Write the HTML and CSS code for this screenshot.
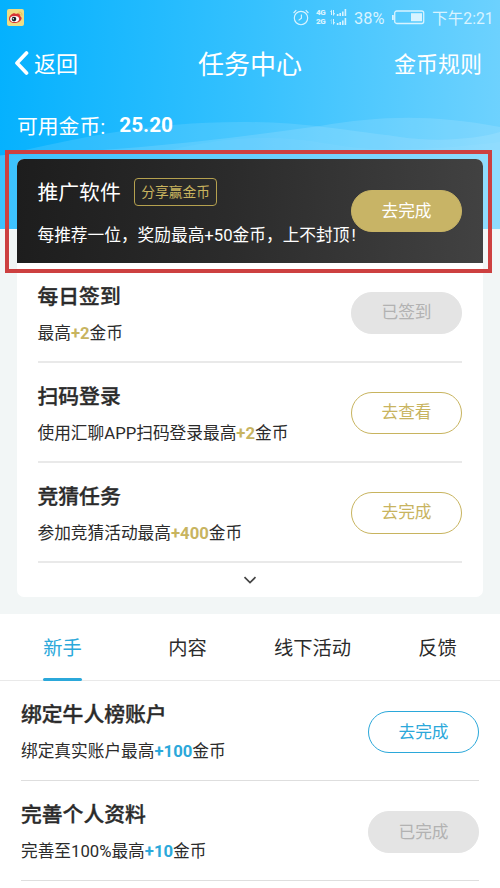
FILE: index.html
```html
<!DOCTYPE html>
<html lang="zh-CN">
<head>
<meta charset="utf-8">
<title>任务中心</title>
<link rel="stylesheet" href="styles.css">
</head>
<body>
<div class="page">
  <header class="hero">
    <svg class="waves" viewBox="0 0 500 229" preserveAspectRatio="none" aria-hidden="true">
      <path d="M0 156C80 137 150 122 240 122C300 122 330 128 400 137C440 143 480 138 500 132V229H0Z" fill="#fff" fill-opacity=".11"/>
      <path d="M0 155C130 152 240 137 320 126C380 116 430 114 500 127V229H0Z" fill="#fff" fill-opacity=".12"/>
      <path d="M170 150C220 138 270 133 330 144C380 153 430 150 500 142V229H170Z" fill="#fff" fill-opacity=".04"/>
    </svg>
    <div class="status">
      <svg class="weibo" viewBox="0 0 17 17">
        <rect width="17" height="17" rx="2" fill="#efdc83"/>
        <path d="M2 10C2 6 7 3 9 5C12 4 14 5 13 7C17 9 13 14 8 14C4 14 2 12 2 10Z" fill="#d73336"/>
        <ellipse cx="7.6" cy="10" rx="4.5" ry="3.1" fill="#fff"/>
        <circle cx="7" cy="10.1" r="2.3" fill="#17232b"/>
        <circle cx="6.3" cy="9.7" r=".7" fill="#fff"/>
        <path d="M11.5 3.2C14 2.5 15.5 4.4 14.8 6.7M11.8 5C13 4.8 13.5 5.5 13.3 6.5" fill="none" stroke="#e9b94e" stroke-width=".9"/>
      </svg>
      <div class="indicators">
        <svg class="alarm" viewBox="0 0 16 17" fill="none" stroke="currentColor" stroke-width="1.15">
          <circle cx="8" cy="9" r="6.7"/>
          <path d="M8.4 5.5V9.2L5.6 11.4M.6 4L3.300 1.2M12.700 1.2L15.4 4"/>
        </svg>
        <div class="network"><span>4G</span><span>2G</span></div>
        <svg class="signal" viewBox="0 0 17 17" fill="currentColor">
          <path d="M0 3L2 .5V6H1V3ZM3 1H4V4H5L3.5 7L3 6ZM6.8 5H8.5V7H6.8ZM9.4 4H11V7H9.4ZM12 2.5H13.6V7H12ZM14.6 0H16.2V7H14.6Z"/>
          <path d="M3 10H4V13H5L3.5 16L3 15ZM6.8 14H8.5V16H6.8ZM9.4 13H11V16H9.4ZM12 11.5H13.6V16H12ZM14.6 9H16.2V16H14.6Z"/>
          <path d="M0 12L2 9.5V15H1V12Z" opacity=".4"/>
        </svg>
        <span class="percent">38%</span>
        <svg class="battery" viewBox="0 0 33 15">
          <rect x="2.700" y="1" width="29" height="12.500" rx="2" fill="none" stroke="currentColor" stroke-width="1.300"/>
          <path d="M0 5H1.800V10H0Z" fill="currentColor"/>
          <rect x="19" y="3.200" width="11" height="8" fill="currentColor"/>
        </svg>
        <span class="clock">下午2:21</span>
      </div>
    </div>
    <nav class="navbar">
      <a class="back"><svg viewBox="0 0 15 24"><path d="M12.500 2L3 12L12.500 22" fill="none" stroke="#fff" stroke-width="3.700" stroke-linecap="round" stroke-linejoin="round"/></svg>返回</a>
      <h1>任务中心</h1>
      <a class="rules">金币规则</a>
    </nav>
    <div class="balance"><span>可用金币:</span><b>25.20</b></div>
  </header>

  <main class="card">
    <div class="highlight"></div>
    <section class="promo">
      <div class="promo-text">
        <div class="promo-head"><h2>推广软件</h2><span class="tag">分享赢金币</span></div>
        <p>每推荐一位，奖励最高+50金币，上不封顶<span class="bang">!</span></p>
      </div>
      <button class="btn gold-fill">去完成</button>
    </section>
    <section class="tasks">
      <article class="task">
        <div><h3>每日签到</h3><p>最高<b>+2</b>金币</p></div>
        <button class="btn done">已签到</button>
      </article>
      <article class="task">
        <div><h3>扫码登录</h3><p>使用汇聊APP扫码登录最高<b>+2</b>金币</p></div>
        <button class="btn gold">去查看</button>
      </article>
      <article class="task">
        <div><h3>竞猜任务</h3><p>参加竞猜活动最高<b>+400</b>金币</p></div>
        <button class="btn gold">去完成</button>
      </article>
    </section>
    <div class="expand"><svg viewBox="0 0 14 8"><path d="M1.500 1.200L7 6.500L12.500 1.200" fill="none" stroke="#444" stroke-width="1.700"/></svg></div>
  </main>

  <nav class="tabs">
    <a class="active">新手</a><a>内容</a><a>线下活动</a><a>反馈</a>
  </nav>
  <section class="tasks novice">
    <article class="task">
      <div><h3>绑定牛人榜账户</h3><p>绑定真实账户最高<b>+100</b>金币</p></div>
      <button class="btn blue">去完成</button>
    </article>
    <article class="task">
      <div><h3>完善个人资料</h3><p>完善至100%最高<b>+10</b>金币</p></div>
      <button class="btn done">已完成</button>
    </article>
  </section>
</div>
</body>
</html>
```
FILE: styles.css
```css
* { box-sizing: border-box; }
body {
  margin: 0;
  background: #f2f6f6;
  color: #2b2b2b;
  font-family: Roboto, "Noto Sans CJK SC", sans-serif;
}
h1, h2, h3, p { margin: 0; font-weight: 400; }
.page { height: 888px; overflow: hidden; }

.hero {
  position: relative;
  height: 229px;
  color: #fff;
  background: linear-gradient(93deg, #04b1fe 0%, #36c1fe 50%, #6fd2fe 100%);
}
.waves { position: absolute; inset: 0; width: 100%; height: 100%; }
.status, .navbar, .balance { position: relative; display: flex; align-items: center; }
.status { height: 34px; padding: 0 7px; justify-content: space-between; }
.weibo { width: 17px; height: 17px; }
.indicators { display: flex; align-items: center; color: #d8f3ff; font-size: 16.5px; }
.alarm { width: 16px; height: 17px; margin-right: 7px; }
.network { display: flex; flex-direction: column; width: 14px; font-size: 8px; line-height: 9.5px; font-weight: 900; letter-spacing: -.3px; }
.signal { width: 17px; height: 17px; margin-right: 7px; }
.percent { width: 38px; margin-top: 2px; font-size: 16.4px; white-space: nowrap; }
.battery { width: 33px; height: 15px; margin-right: 7px; }
.clock { width: 61px; margin-top: 1px; font-size: 15.7px; white-space: nowrap; }

.navbar { height: 56px; display: grid; grid-template-columns: 1fr auto 1fr; padding: 0 18px 0 14px; font-size: 22px; }
.navbar h1 { margin-left: 4px; font-size: 26px; }
.back { display: flex; align-items: center; gap: 5px; }
.back svg { width: 15px; height: 24px; margin-top: 2px; }
.rules { justify-self: end; }
.balance { height: 68px; padding: 1px 0 0 17px; gap: 14px; font-size: 20.8px; }
.balance b { margin-top: 1px; }

.card { position: relative; margin: -70.5px 17px 0 16.5px; height: 438.5px; background: #fff; border-radius: 7px; }
.highlight { position: absolute; left: -11.5px; top: -8.5px; width: 487px; height: 123px; border: 4px solid #cd4040; }
.promo {
  height: 104px;
  padding: 19.5px 21px 0;
  display: flex;
  justify-content: space-between;
  border-radius: 7px 7px 0 0;
  color: #fff;
  background: linear-gradient(93deg, #1d1d1d, #2b2b2b 45%, #424242);
}
.promo-text { flex: none; width: 313.5px; }
.promo-head { display: flex; align-items: center; gap: 13.500px; height: 27px; }
.promo h2 { margin-top: -2px; font-size: 20.8px; }
.tag { height: 28px; padding: 0 6px; border: 1px solid #b5a14f; border-radius: 4px; color: #c9b45f; font-size: 13.8px; line-height: 27px; }
.promo p { margin-top: 18px; font-size: 16.7px; line-height: 26px; white-space: nowrap; }
.bang { margin-left: 2px; }

.btn {
  flex: none;
  width: 111px;
  height: 42px;
  padding: 1.5px 0 0;
  border: 1.5px solid;
  border-radius: 21px;
  background: transparent;
  font: 16.7px/38px Roboto, "Noto Sans CJK SC", sans-serif;
}
.promo .btn { position: relative; margin-top: 12px; }
.gold-fill { background: #c8b466; border-color: #c8b466; color: #fff; }
.gold { color: #c8b45f; border-color: #c8b45f; }
.blue { color: #2ba8da; border-color: #2ba8da; }
.done { background: #e4e4e4; border-color: #e4e4e4; color: #b2b2b2; }

.tasks { padding: 0 21px; }
.task { height: 100px; padding-top: 19px; display: flex; justify-content: space-between; border-bottom: 2px solid #e9e9e9; }
.task h3 { font-size: 20.8px; line-height: 30px; font-weight: 500; -webkit-text-stroke: .35px currentColor; }
.task p { margin-top: 9px; font-size: 16.7px; line-height: 26px; }
.task b { color: #c8b45f; }
.task .btn { margin-top: 10px; }
.expand { display: flex; justify-content: center; padding-top: 13px; }
.expand svg { width: 14px; height: 8px; }

.tabs {
  display: grid;
  grid-template-columns: repeat(4, 125px);
  justify-items: center;
  height: 68px;
  margin-top: 17px;
  background: #fff;
  border-bottom: 2px solid #e9e9e9;
  font-size: 19.3px;
  line-height: 69px;
}
.tabs a { height: 67px; }
.tabs .active { position: relative; color: #2ba8da; }
.active::after { content: ""; position: absolute; left: 0; right: 0; bottom: 0; height: 3px; border-radius: 2px; background: #2ba8da; }
.novice { height: 210px; margin-top: -1px; background: #fff; }
.novice .task { padding-top: 19px; border-bottom-width: 1px; border-color: #dedede; }
.novice .btn { margin-top: 11px; }
.novice b { color: #2ba8da; }
```
